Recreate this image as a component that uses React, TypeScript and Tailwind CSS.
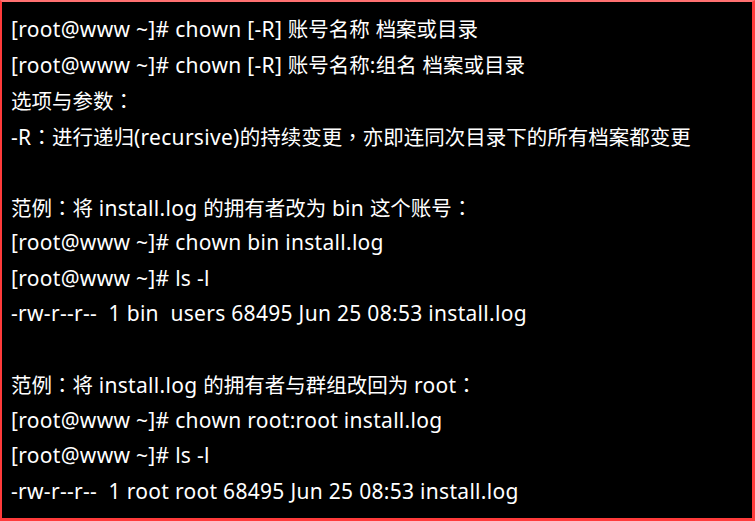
import React from "react";

const lines: string[] = [
  "[root@www ~]# chown [-R] 账号名称 档案或目录",
  "[root@www ~]# chown [-R] 账号名称:组名 档案或目录",
  "选项与参数：",
  "-R：进行递归(recursive)的持续变更，亦即连同次目录下的所有档案都变更",
  "",
  "范例：将 install.log 的拥有者改为 bin 这个账号：",
  "[root@www ~]# chown bin install.log",
  "[root@www ~]# ls -l",
  "-rw-r--r--  1 bin  users 68495 Jun 25 08:53 install.log",
  "",
  "范例：将 install.log 的拥有者与群组改回为 root：",
  "[root@www ~]# chown root:root install.log",
  "[root@www ~]# ls -l",
  "-rw-r--r--  1 root root 68495 Jun 25 08:53 install.log",
];

function Line({ text }: { text: string }) {
  const parts = text.split(/([\u4e00-\u9fff]+|[：，])/).filter((p) => p.length > 0);
  return (
    <>
      {parts.map((p, i) => {
        if (p === "：" || p === "，") {
          return (
            <span key={i} className="text-[20.5px]" style={{ fontFamily: '"Noto Sans CJK TC", sans-serif' }}>
              {p}
            </span>
          );
        }
        if (/[\u4e00-\u9fff]/.test(p)) {
          return (
            <span key={i} className="text-[20.5px]">
              {p}
            </span>
          );
        }
        return (
          <span key={i} className="tracking-[0.3px]">
            {p}
          </span>
        );
      })}
    </>
  );
}

export default function App() {
  return (
    <div className="w-[755px] h-[521px] bg-black border-t-2 border-l-2 border-r-[3px] border-b-[3px] border-[#ff3b3b] border-t-[#ff7070] overflow-hidden">
      <div
        className="pl-[9px] pt-[10px] text-white text-[21px] leading-[35.5px] whitespace-pre"
        style={{ fontFamily: '"Noto Sans", "Noto Sans CJK SC", sans-serif' }}
      >
        {lines.map((l, i) => (
          <div key={i} className="h-[35.5px]">
            <Line text={l} />
          </div>
        ))}
      </div>
    </div>
  );
}
